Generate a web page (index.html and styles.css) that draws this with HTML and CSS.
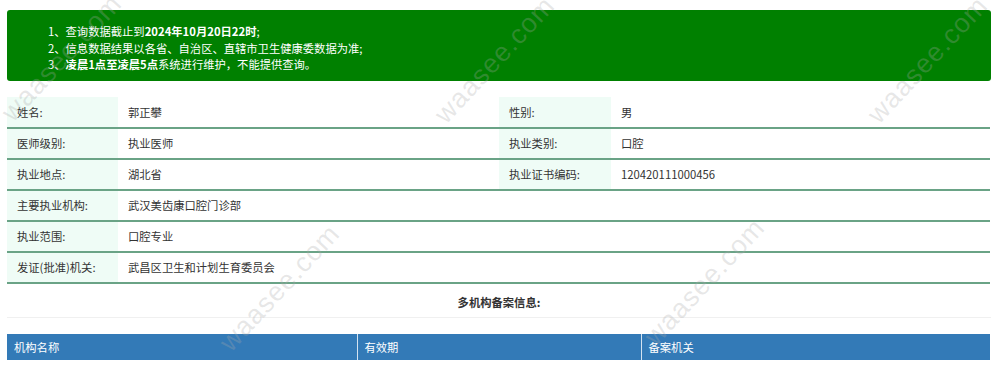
FILE: index.html
```html
<!DOCTYPE html>
<html lang="zh-CN">
<head>
<meta charset="utf-8">
<title>医师执业信息查询</title>
<link rel="stylesheet" href="styles.css">
</head>
<body>
<div class="page">
  <div class="notice">
    <p>1、查询数据截止到<b>2024年10月20日22时</b>;</p>
    <p>2、信息数据结果以各省、自治区、直辖市卫生健康委数据为准;</p>
    <p>3、<b>凌晨1点至凌晨5点</b>系统进行维护，不能提供查询。</p>
  </div>

  <table class="info">
    <colgroup>
      <col class="c-label"><col class="c-value"><col class="c-label2"><col>
    </colgroup>
    <tr>
      <td class="label">姓名:</td><td>郭正攀</td>
      <td class="label">性别:</td><td>男</td>
    </tr>
    <tr>
      <td class="label">医师级别:</td><td>执业医师</td>
      <td class="label">执业类别:</td><td>口腔</td>
    </tr>
    <tr>
      <td class="label">执业地点:</td><td>湖北省</td>
      <td class="label">执业证书编码:</td><td>120420111000456</td>
    </tr>
    <tr>
      <td class="label">主要执业机构:</td><td colspan="3">武汉美齿康口腔门诊部</td>
    </tr>
    <tr>
      <td class="label">执业范围:</td><td colspan="3">口腔专业</td>
    </tr>
    <tr>
      <td class="label">发证(批准)机关:</td><td colspan="3">武昌区卫生和计划生育委员会</td>
    </tr>
  </table>

  <div class="subtitle">多机构备案信息:</div>

  <table class="multi">
    <colgroup>
      <col class="m1"><col class="m2"><col>
    </colgroup>
    <tr>
      <th>机构名称</th><th>有效期</th><th>备案机关</th>
    </tr>
  </table>
</div>

<div class="watermarks" aria-hidden="true">
  <span class="wm wm1">waasee.com</span>
  <span class="wm wm2">waasee.com</span>
  <span class="wm wm3">waasee.com</span>
  <span class="wm wm4">waasee.com</span>
  <span class="wm wm5">waasee.com</span>
</div>
</body>
</html>
```

FILE: styles.css
```css
html, body {
  margin: 0;
  padding: 0;
  background: #ffffff;
}

body {
  font-family: "Noto Sans CJK SC", "Microsoft YaHei", sans-serif;
  font-size: 11.3px;
  color: #333333;
  overflow: hidden;
}

.page {
  width: 984px;
  padding: 10px 9px 0 7px;
}

.notice {
  background: #008000;
  color: #ffffff;
  border-radius: 3px;
  padding: 13px 0 8px 41px;
  line-height: 16.5px;
}

.notice p {
  margin: 0;
}

.notice b {
  font-weight: bold;
}

.info {
  margin-top: 16px;
  width: 983px;
  border-collapse: collapse;
  table-layout: fixed;
}

.info .c-label { width: 111px; }
.info .c-value { width: 381px; }
.info .c-label2 { width: 112px; }

.info td {
  height: 31px;
  padding: 0 10px;
  border-bottom: 2px solid #6aa386;
  box-sizing: border-box;
  white-space: nowrap;
  vertical-align: middle;
}

.info td.label {
  background: #effcf6;
}

.subtitle {
  text-align: center;
  font-weight: bold;
  color: #333333;
  height: 33px;
  line-height: 36px;
  border-bottom: 1px solid #f0f0f0;
}

.multi {
  margin-top: 16px;
  width: 983px;
  border-collapse: collapse;
  table-layout: fixed;
}

.multi .m1 { width: 350px; }
.multi .m2 { width: 284px; }

.multi th {
  background: #337ab7;
  color: #ffffff;
  font-weight: normal;
  text-align: left;
  height: 26px;
  padding: 0 7px;
  border-left: 1px solid #d4e3f1;
}

.multi th:first-child {
  border-left: none;
}

.watermarks {
  position: absolute;
  inset: 0;
  pointer-events: none;
  overflow: hidden;
}

.wm {
  position: absolute;
  font-family: "Liberation Sans", Arial, sans-serif;
  font-size: 27px;
  color: rgba(170, 170, 170, 0.28);
  transform: translate(-50%, -50%) rotate(-47deg);
  white-space: nowrap;
  letter-spacing: 1px;
}

.wm1 { left: 62px; top: 58px; }
.wm2 { left: 495px; top: 60px; }
.wm3 { left: 928px; top: 60px; }
.wm4 { left: 280px; top: 288px; }
.wm5 { left: 705px; top: 282px; }
```
